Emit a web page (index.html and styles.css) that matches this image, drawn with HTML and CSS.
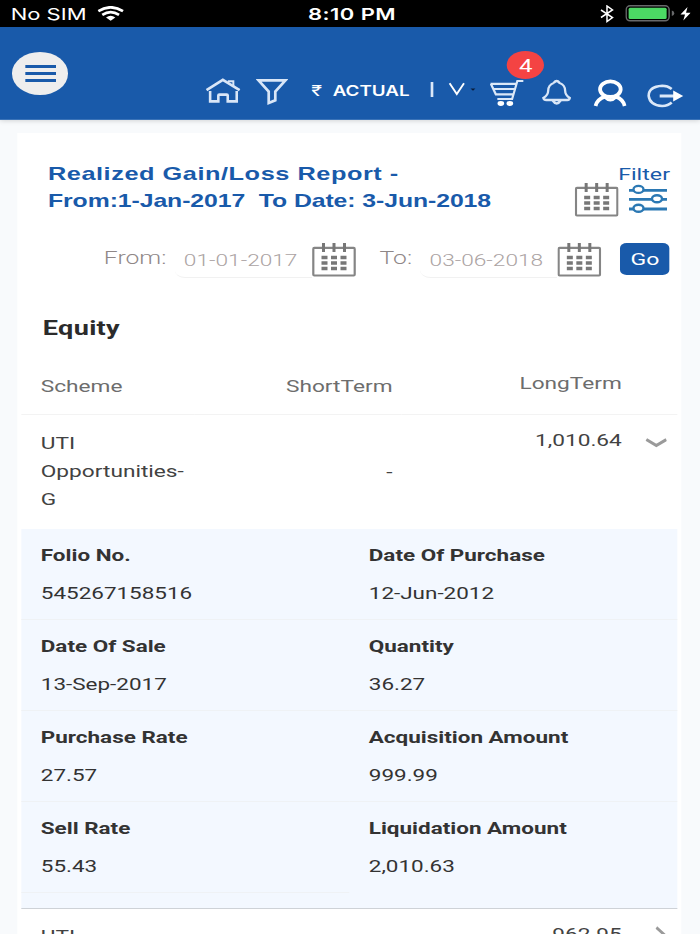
FILE: index.html
```
<!DOCTYPE html>
<html lang="en">
<head>
    <meta charset="UTF-8">
    <meta name="viewport" content="width=device-width, initial-scale=1.0">
    <title>Realized Gain/Loss Report</title>
    <link rel="stylesheet" href="styles.css">
</head>
<body>
    <div class="screen">
        <div class="status-bar">
            <div class="carrier">
                <span class="carrier-name">No SIM</span>
                <svg class="wifi" viewBox="0 0 27 15" preserveAspectRatio="none" fill="none" stroke="#fff" stroke-width="2.7">
                    <path d="M1 5.2Q13.5-2.6 26 5.2M5 8.9Q13.5 3.2 22 8.9"/>
                    <path d="M8.8 11.4Q13.5 8.3 18.2 11.4L13.5 14.8Z" fill="#fff" stroke="none"/>
                </svg>
            </div>
            <span class="clock">8:10 PM</span>
            <div class="power">
                <svg class="bluetooth" viewBox="0 0 14 18" preserveAspectRatio="none" fill="none" stroke="#fff" stroke-width="1.5">
                    <path d="M1 5L12.5 12.5L7 16.5V1L12.5 5L1 12.5"/>
                </svg>
                <svg class="battery" viewBox="0 0 50 17" preserveAspectRatio="none">
                    <rect x=".8" y=".8" width="43" height="15" rx="4" fill="none" stroke="#68696b" stroke-width="1.5"/>
                    <rect x="3.3" y="2.7" width="38" height="11.2" rx="1.5" fill="#4cd964"/>
                    <path d="M46.5 5.5Q49 6 49 8.3T46.5 11Z" fill="#68696b"/>
                </svg>
                <svg class="bolt" viewBox="0 0 11 14" preserveAspectRatio="none">
                    <path d="M7.5 0L.5 7.5H5L3.3 13.5L10.6 5.7H6Z" fill="#fff"/>
                </svg>
            </div>
        </div>

        <div class="header">
            <div class="menu-btn">
                <span></span>
                <span></span>
                <span></span>
            </div>
            <div class="nav">
                <svg class="icon home" viewBox="0 0 36 36" preserveAspectRatio="none" fill="none" stroke="#d9e6f7" stroke-width="2.6">
                    <path d="M1.2 15.2L17.5 4.8L34.3 15.2M4.8 16V26.4H13V20.6Q13 19.6 14 19.6H21.4Q22.4 19.6 22.4 20.6V26.4H31.4V16"/>
                    <path d="M23.5 7V6.2H28V11.5" stroke-width="2"/>
                </svg>
                <svg class="icon funnel" viewBox="0 0 32 36" preserveAspectRatio="none" fill="none" stroke="#d9e6f7" stroke-width="2.7">
                    <path d="M2.6 5.4H29.4L19.3 16.5V25.3L12.7 28V16.5Z"/>
                </svg>
                <div class="mode">
                    <span class="rupee">₹</span>
                    <span class="mode-name">ACTUAL</span>
                    <span class="divider"></span>
                    <svg class="drop" viewBox="0 0 28 14" preserveAspectRatio="none">
                        <path d="M1.6 1.2L8.8 12L16 1.2" fill="none" stroke="#fff" stroke-width="1.9"/>
                        <path d="M22.5 6.5H27.4L25 8.7Z" fill="#0a1c38"/>
                    </svg>
                </div>
                <div class="cart-box">
                    <svg class="icon cart" viewBox="0 0 36 36" preserveAspectRatio="none" fill="none" stroke="#dbe8f8" stroke-width="2.2">
                        <path d="M34 6H28L22.8 24H8M1.2 8.8H27M1.5 8.8L6.5 19.3H23.5M4.5 14H25.5"/>
                        <ellipse cx="11.5" cy="28.5" rx="3.3" ry="2.4" fill="#fff" stroke="none"/>
                        <ellipse cx="20.5" cy="28.5" rx="3.3" ry="2.4" fill="#fff" stroke="none"/>
                    </svg>
                    <span class="badge">4</span>
                </div>
                <svg class="icon bell" viewBox="0 0 31 36" preserveAspectRatio="none" fill="none" stroke="#d9e6f7" stroke-width="2.3">
                    <path d="M12.3 8Q15.3 4 18.3 8Q23.8 10 23.8 16Q23.8 20 28.4 23Q28 25 26 25H5Q2.5 25 2 23Q6.8 20 6.8 16Q6.8 10 12.3 8M11.3 25.5Q15.3 31.5 19.3 25.5"/>
                </svg>
                <svg class="icon user" viewBox="0 0 33 36" preserveAspectRatio="none" fill="none" stroke="#fff" stroke-width="3.8">
                    <ellipse cx="17" cy="14.2" rx="10.3" ry="7.8"/>
                    <path d="M2.2 31Q4 24 11.5 21.8M31.3 31Q29.5 24 22.5 21.8"/>
                    <path d="M11 22Q17 28 23 22" stroke-width="2.6"/>
                </svg>
                <svg class="icon logout" viewBox="0 0 37 36" preserveAspectRatio="none" fill="none" stroke="#dbe8f8" stroke-width="2.6">
                    <path d="M25 14Q21 10.8 15.5 10.8Q2 11.8 2 20.8Q3 30 15.5 31Q21.5 30.8 25 27.5"/>
                    <path d="M13 21H31" stroke-width="3"/>
                    <path d="M26.5 15.5L36.5 21L26.5 26.5Z" fill="#fff" stroke="none"/>
                </svg>
            </div>
        </div>

        <div class="card">
            <div class="report-head">
                <h1><span class="title-line">Realized Gain/Loss Report -</span><span class="date-line">From:1-Jan-2017&nbsp; To Date: 3-Jun-2018</span></h1>
                <div class="filter">
                    <span class="filter-label">Filter</span>
                    <div class="filter-icons">
                        <svg class="calendar" viewBox="0 0 44 34" preserveAspectRatio="none">
                            <rect x="1.3" y="4.9" width="41.4" height="27.6" rx="1" fill="none" stroke="#858585" stroke-width="2.2"/>
                            <path d="M11.5 0V9M22 0V9M32.5 0V9" stroke="#777" stroke-width="3"/>
                            <path d="M9.5 14.5H34.5M9.5 20H34.5M9.5 25.5H34.5" stroke="#777" stroke-width="3.6" stroke-dasharray="6 3.5"/>
                        </svg>
                        <svg class="sliders" viewBox="0 0 40 30" preserveAspectRatio="none" fill="#fff" stroke="#2b78b3" stroke-width="2.8">
                            <path d="M1 6.4H39M1 15.3H39M1 25H39"/>
                            <ellipse cx="10.5" cy="5.4" rx="5" ry="3.5" stroke-width="2.4"/>
                            <ellipse cx="29" cy="14.8" rx="5" ry="3.5" stroke-width="2.4"/>
                            <ellipse cx="10.5" cy="24.2" rx="5" ry="3.5" stroke-width="2.4"/>
                        </svg>
                    </div>
                </div>
            </div>

            <div class="date-form">
                <label class="from-label">From:</label>
                <div class="date-input">01-01-2017</div>
                <svg class="calendar" viewBox="0 0 44 34" preserveAspectRatio="none">
                    <rect x="1.3" y="4.9" width="41.4" height="27.6" rx="1" fill="none" stroke="#858585" stroke-width="2.2"/>
                    <path d="M11.5 0V9M22 0V9M32.5 0V9" stroke="#777" stroke-width="3"/>
                    <path d="M9.5 14.5H34.5M9.5 20H34.5M9.5 25.5H34.5" stroke="#777" stroke-width="3.6" stroke-dasharray="6 3.5"/>
                </svg>
                <label class="to-label">To:</label>
                <div class="date-input">03-06-2018</div>
                <svg class="calendar" viewBox="0 0 44 34" preserveAspectRatio="none">
                    <rect x="1.3" y="4.9" width="41.4" height="27.6" rx="1" fill="none" stroke="#858585" stroke-width="2.2"/>
                    <path d="M11.5 0V9M22 0V9M32.5 0V9" stroke="#777" stroke-width="3"/>
                    <path d="M9.5 14.5H34.5M9.5 20H34.5M9.5 25.5H34.5" stroke="#777" stroke-width="3.6" stroke-dasharray="6 3.5"/>
                </svg>
                <div class="go-btn">Go</div>
            </div>

            <h2>Equity</h2>

            <div class="table">
                <div class="row head">
                    <div class="cell scheme">Scheme</div>
                    <div class="cell short">ShortTerm</div>
                    <div class="cell long">LongTerm</div>
                </div>
                <div class="row">
                    <div class="cell scheme">UTI Opportunities-G</div>
                    <div class="cell short">-</div>
                    <div class="cell long">1,010.64
                        <svg class="chevron" viewBox="0 0 22 12" preserveAspectRatio="none">
                            <path d="M1 2.5L11 8.5L21 2.5" fill="none" stroke="#9a9a9a" stroke-width="3.2"/>
                        </svg>
                    </div>
                </div>

                <div class="details">
                    <div class="detail-item">
                        <span>Folio No.</span>
                        <p>545267158516</p>
                    </div>
                    <div class="detail-item">
                        <span>Date Of Purchase</span>
                        <p>12-Jun-2012</p>
                    </div>
                    <div class="detail-item">
                        <span>Date Of Sale</span>
                        <p>13-Sep-2017</p>
                    </div>
                    <div class="detail-item">
                        <span>Quantity</span>
                        <p>36.27</p>
                    </div>
                    <div class="detail-item">
                        <span>Purchase Rate</span>
                        <p>27.57</p>
                    </div>
                    <div class="detail-item">
                        <span>Acquisition Amount</span>
                        <p>999.99</p>
                    </div>
                    <div class="detail-item">
                        <span>Sell Rate</span>
                        <p>55.43</p>
                    </div>
                    <div class="detail-item last">
                        <span>Liquidation Amount</span>
                        <p>2,010.63</p>
                    </div>
                </div>

                <div class="row next">
                    <div class="cell scheme">UTI</div>
                    <div class="cell short"></div>
                    <div class="cell long">962.95
                        <svg class="arrow" viewBox="0 0 14 18" preserveAspectRatio="none">
                            <path d="M2 1.5L11 8.5L2 15.5" fill="none" stroke="#9a9a9a" stroke-width="3"/>
                        </svg>
                    </div>
                </div>
            </div>
        </div>
    </div>
</body>
</html>
```
FILE: styles.css
```
* {
    margin: 0;
    padding: 0;
    box-sizing: border-box;
}

body {
    overflow: hidden;
    background: #f8fafc;
    font-family: Roboto, 'Liberation Sans', sans-serif;
}

.screen {
    width: 525px;
    height: 934px;
    overflow: hidden;
    transform: scaleX(1.33333);
    transform-origin: 0 0;
    background: #f8fafc;
}

svg {
    display: block;
    flex: none;
}

.status-bar {
    display: grid;
    grid-template-columns: 1fr auto 1fr;
    align-items: center;
    height: 27px;
    padding: 0 7px 0 8px;
    background: #000;
    color: #fff;
    font-family: Inter, sans-serif;
    font-size: 16.5px;
}

.carrier {
    display: flex;
    align-items: center;
    gap: 8.3px;
}

.wifi {
    width: 20px;
    height: 15px;
}

.clock {
    padding-left: 2px;
    font-weight: 600;
    letter-spacing: 0.35px;
}

.power {
    display: flex;
    justify-content: flex-end;
    align-items: center;
}

.bluetooth {
    width: 10.5px;
    height: 18px;
    margin-right: 8px;
}

.battery {
    width: 37.5px;
    height: 17px;
    margin-right: 3.5px;
}

.bolt {
    width: 8.3px;
    height: 14px;
}

.header {
    display: flex;
    height: 93px;
    background: #195aaa;
    border-bottom: 1px solid #3a73b8;
    box-shadow: 0 1px 4px rgba(0, 0, 0, 0.15);
}

.menu-btn {
    display: flex;
    flex-direction: column;
    justify-content: center;
    align-items: center;
    gap: 4.4px;
    width: 42px;
    height: 42.5px;
    margin: 25px 0 0 9.4px;
    border-radius: 50%;
    background: #eee;
}

.menu-btn span {
    width: 22.8px;
    height: 2.7px;
    background: #195aaa;
}

.nav {
    display: flex;
    padding-top: 48px;
    margin-left: 103.1px;
}

.icon {
    height: 36px;
}

.home {
    width: 27px;
}

.funnel {
    width: 24px;
    margin-left: 11px;
}

.mode {
    display: flex;
    align-items: center;
    width: 133.5px;
    height: 30px;
    margin-left: 17px;
    color: #fff;
    font-family: Inter, sans-serif;
    font-size: 15px;
}

.rupee {
    width: 16px;
}

.mode-name {
    width: 74px;
    padding-top: 1px;
    font-weight: 600;
    font-size: 14.1px;
}

.divider {
    width: 1.3px;
    height: 15px;
    margin-top: -1px;
    background: #dbe8f8;
}

.drop {
    width: 21px;
    height: 14px;
    margin: -3px 0 0 11.5px;
}

.cart-box {
    position: relative;
}

.cart {
    width: 27px;
}

.badge {
    position: absolute;
    left: 13.3px;
    top: -24px;
    width: 28px;
    height: 28px;
    border-radius: 50%;
    background: #f44343;
    color: #fff;
    font-size: 18px;
    line-height: 30px;
    text-align: center;
}

.bell {
    width: 23.3px;
    margin-left: 12px;
}

.user {
    width: 24.8px;
    margin-left: 16px;
}

.logout {
    width: 27.8px;
    margin-left: 15.3px;
}

.card {
    width: 498px;
    height: 820px;
    margin: 13px 0 0 13.4px;
    background: #fff;
}

.report-head {
    display: flex;
    justify-content: space-between;
    height: 109px;
    padding: 27px 8.9px 0 22.6px;
}

h1 {
    color: #195aaa;
    font-family: 'Liberation Sans', Arial, sans-serif;
    font-size: 19px;
    line-height: 27px;
}

.title-line,
.date-line {
    display: block;
    white-space: nowrap;
}

.title-line {
    letter-spacing: 0.4px;
}

.date-line {
    font-size: 18.6px;
    letter-spacing: -0.06px;
}

.filter-label {
    display: block;
    padding-top: 5px;
    color: #195aaa;
    font-size: 17.4px;
    line-height: 18px;
    text-align: right;
}

.filter-icons {
    display: flex;
    gap: 7px;
    margin-right: 2px;
}

.calendar {
    width: 33px;
    height: 34px;
}

.sliders {
    width: 30px;
    height: 30px;
    margin-top: 1px;
}

.date-form {
    display: flex;
    height: 38px;
    padding-left: 64.5px;
    color: #8f8787;
    font-weight: 300;
    font-size: 18.5px;
}

.from-label,
.to-label {
    padding-top: 6px;
    line-height: 21px;
}

.from-label {
    width: 53px;
}

.to-label {
    width: 30.5px;
    margin-left: 17.5px;
}

.date-input {
    width: 103.3px;
    height: 36px;
    padding: 7px 0 0 7px;
    border-bottom: 1px solid #f1f1f1;
    border-radius: 8px 0 0 8px;
    color: #aba3a3;
    font-size: 17px;
    line-height: 22px;
    white-space: nowrap;
}

.date-form .calendar {
    margin-top: 1px;
}

.go-btn {
    width: 36.5px;
    height: 32px;
    margin: 1px 0 0 14px;
    border-radius: 5px;
    background: #195aaa;
    color: #fff;
    font-weight: 400;
    font-size: 17.3px;
    line-height: 33px;
    text-align: center;
}

h2 {
    padding: 31.5px 0 0 18.7px;
    color: #2b2b2b;
    font-family: Roboto, sans-serif;
    font-size: 20.3px;
    letter-spacing: 0.25px;
    line-height: 32px;
}

.table {
    width: 492px;
    margin-left: 3px;
    color: #424242;
    font-size: 17px;
    line-height: 28px;
}

.row {
    display: grid;
    grid-template-columns: 130px 155px 207px;
    height: 114.5px;
    background: #fff;
}

.cell {
    padding-top: 14.5px;
}

.scheme {
    padding-left: 14.2px;
}

.short {
    align-self: center;
    padding: 0 7px 0 0;
    text-align: right;
}

.long {
    display: flex;
    justify-content: flex-end;
    padding: 11.5px 42px 0 0;
}

.head {
    height: 71px;
    color: #6d6d6d;
}

.head .cell {
    height: 100%;
    padding-top: 28px;
    border-bottom: 1px solid #f3f3f3;
}

.head .long {
    padding-top: 25px;
}

.chevron {
    width: 16.5px;
    height: 12px;
    margin: 11px -34px 0 17.5px;
}

.details {
    display: grid;
    grid-template-columns: 1fr 1fr;
    height: 379.5px;
    align-content: start;
    border-bottom: 1.5px solid #ced2d7;
    background: #f3f8ff;
    color: #333;
    font-size: 16.85px;
}

.detail-item {
    height: 91.1px;
    padding: 11.5px 0 0 14.2px;
    border-bottom: 1px solid #eff2f5;
}

.detail-item.last {
    border-bottom: none;
}

.detail-item span {
    display: block;
    font-weight: 700;
}

.detail-item p {
    padding-top: 10px;
}

.next .cell {
    padding-top: 13.5px;
}

.next .long {
    padding-top: 11.5px;
}

.arrow {
    width: 9px;
    height: 18px;
    margin: 6px -34px 0 25px;
}
```
